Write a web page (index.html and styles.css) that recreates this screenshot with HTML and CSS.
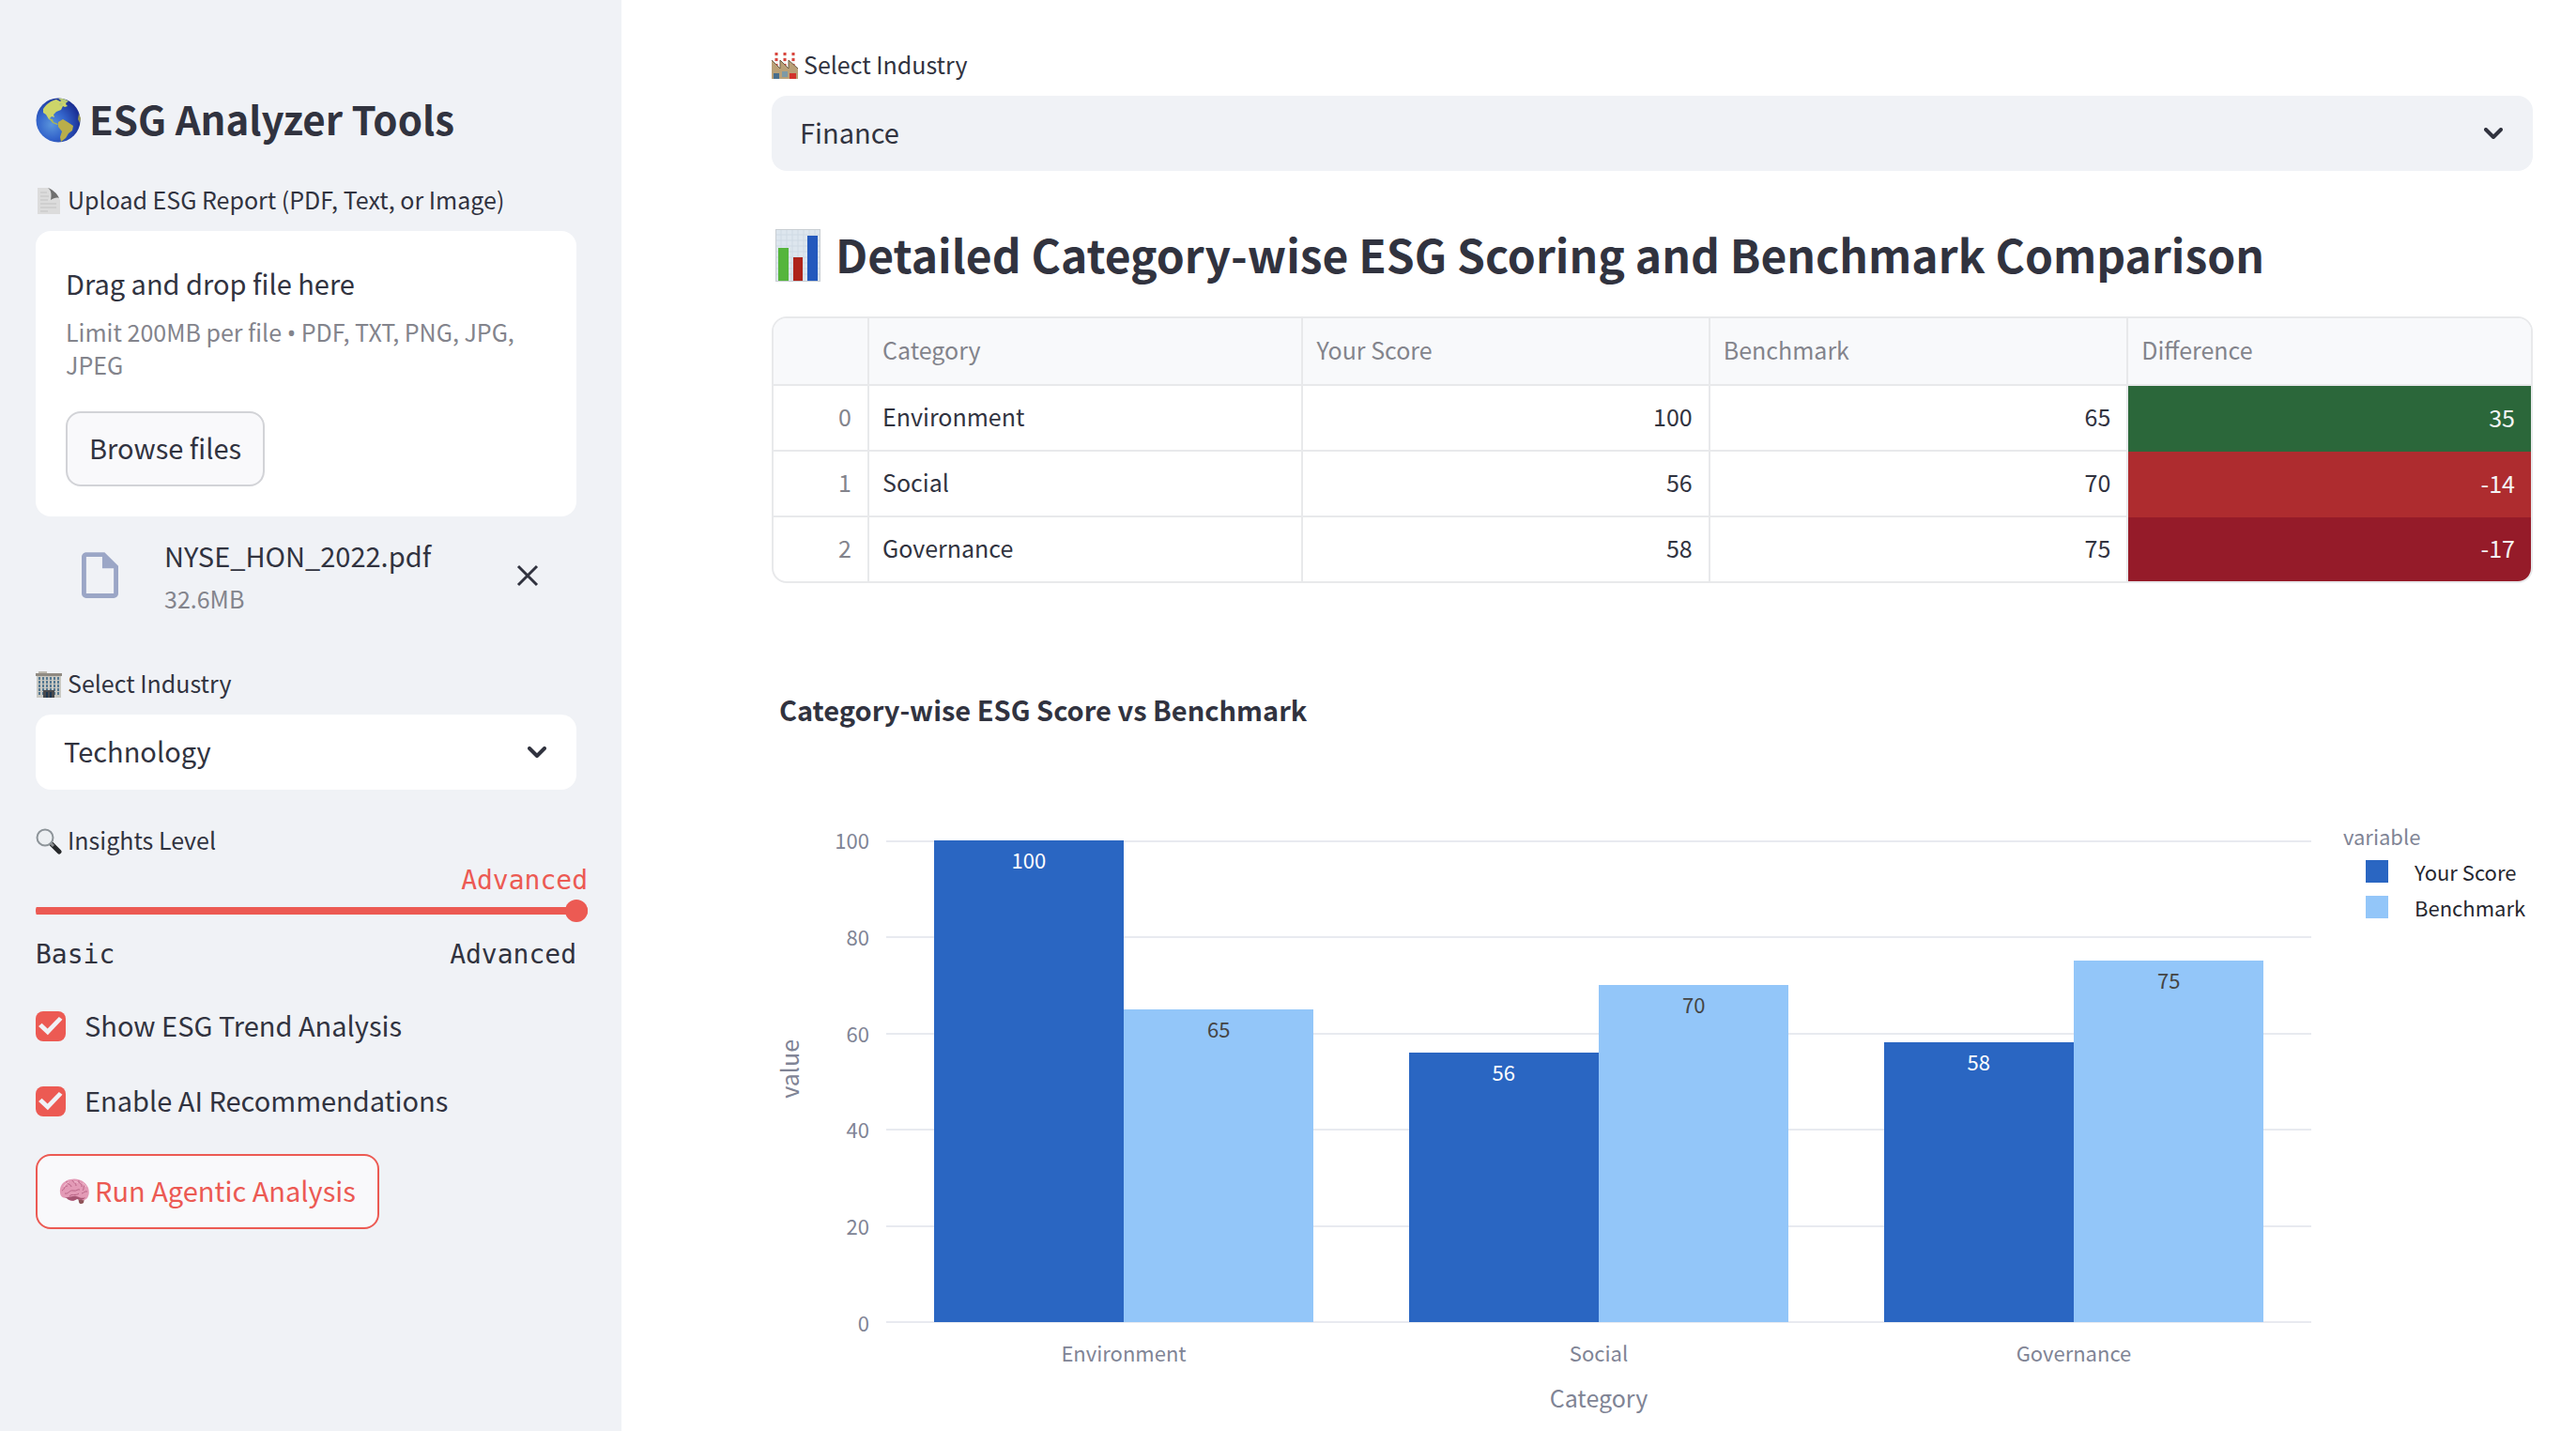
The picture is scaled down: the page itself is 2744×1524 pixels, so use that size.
FILE: index.html
```html
<!DOCTYPE html>
<html lang="en">
<head>
<meta charset="utf-8">
<title>ESG Analyzer</title>
<link rel="stylesheet" href="styles.css">
</head>
<body>
<div class="app">
  <aside class="sidebar">
    <h1 class="sidebar-title">
      <svg class="icon-globe" viewBox="0 0 48 48" aria-hidden="true">
        <defs><radialGradient id="sea" cx=".35" cy=".6" r=".65"><stop offset="0" stop-color="#5b96dc"/><stop offset=".5" stop-color="#3364cb"/><stop offset="1" stop-color="#1b2f94"/></radialGradient></defs>
        <circle cx="24" cy="24" r="23.500" fill="url(#sea)"/>
        <path d="M8 12C12 6 17 3 22 2l4 2 3-2 4 2-1 3 2 2-3 1-2-1-2 4-5 2-3 3 1 3-3-1-2 2 3 3-4-2-3-5-3-2z" fill="#cdd569"/>
        <path d="M24 1c4-1 8 1 11 3l-4 2-4-3zM26 5l3 1-1 3-3-1z" fill="#b9cb78"/>
        <path d="M14 22l4 1 1 3 5 2-1 1-5-2z" fill="#a9b657"/>
        <path d="M24 26l5-3 5 3 6 4-1 5-4 3-3 5-5 4-1-5 2-6-4-5z" fill="#b9ae4a"/>
        <path d="M46 17l2 5-1 5-2-4z" fill="#9c9a52"/>
      </svg>
      <span>ESG Analyzer Tools</span>
    </h1>

    <label class="label" for="report">
      <svg class="icon-small" viewBox="0 0 28 28" aria-hidden="true">
        <path d="M2 0h11c4 1 4 6 4 9 4-1 8 1 9 4v15H2z" fill="#dcdcdc"/>
        <path d="M13 0c5 2 10 6 12 11-3-1-6 0-9 2 1-5 1-10-3-13z" fill="#6f6f6f"/>
        <path d="M5 5h7M5 9h9M5 13h8M5 17h17M5 21h17M5 25h8" stroke="#c3c3c3" stroke-width="1"/>
      </svg>
      <span>Upload ESG Report (PDF, Text, or Image)</span>
    </label>
    <section class="dropzone">
      <input id="report" type="file" hidden>
      <p class="drop-title">Drag and drop file here</p>
      <p class="drop-hint">Limit 200MB per file <span class="bullet">•</span> PDF, TXT, PNG, JPG, JPEG</p>
      <button class="button" type="button"><span>Browse files</span></button>
    </section>
    <div class="file-row">
      <svg class="icon-file" viewBox="4 2 16 20" aria-hidden="true"><path fill="#9ba6c6" d="M14 2H6c-1.100 0-2 .9-2 2v16c0 1.100.9 2 2 2h12c1.100 0 2-.9 2-2V8l-6-6zM6 20V4h7v5h5v11H6z"/></svg>
      <div class="file-info">
        <div class="file-name">NYSE_HON_2022.pdf</div>
        <div class="file-size">32.6MB</div>
      </div>
      <button class="icon-button" type="button" aria-label="Remove file">
        <svg class="icon-close" viewBox="0 0 24 24" aria-hidden="true"><path d="M2 2l20 20M22 2L2 22" stroke="#31333f" stroke-width="3"/></svg>
      </button>
    </div>

    <label class="label" for="sector">
      <svg class="icon-small" viewBox="0 0 28 28" aria-hidden="true">
        <path d="M3 0h9v3H3z" fill="#bdb9b0"/><path d="M0 2h28v3H0z" fill="#8f8a82"/><path d="M1 5h26v23H1z" fill="#c8c8c2"/>
        <path d="M4 6v19M8 6v19M12 6v19M16 6v19M20 6v19M24 6v19" stroke="#557891" stroke-width="2" stroke-dasharray="3 1"/>
        <path d="M8 20h12v8H8z" fill="#4a4a4c"/><path d="M11 22h2v6h-2zM15 22h2v6h-2z" fill="#1d3650"/>
      </svg>
      <span>Select Industry</span>
    </label>
    <div class="select-box">
      <select class="select select-light" id="sector"><option>Technology</option></select>
      <svg class="icon-chevron" viewBox="0 0 20 12" aria-hidden="true"><path d="M2 2l8 8 8-8" fill="none" stroke="#31333f" stroke-width="4" stroke-linecap="round" stroke-linejoin="round"/></svg>
    </div>

    <label class="label label-slider" for="level">
      <svg class="icon-small" viewBox="0 0 28 28" aria-hidden="true">
        <path d="M17 17l8 8" stroke="#26282b" stroke-width="5" stroke-linecap="round"/><path d="M15 15l4 4" stroke="#8a8d90" stroke-width="3"/>
        <circle cx="10" cy="10" r="8.500" fill="#eceff2" stroke="#8d9499" stroke-width="2"/>
      </svg>
      <span>Insights Level</span>
    </label>
    <div class="slider">
      <output class="slider-value" for="level">Advanced</output>
      <input class="slider-input" id="level" type="range" min="0" max="2" value="2">
      <div class="slider-ends"><span>Basic</span><span>Advanced</span></div>
    </div>

    <label class="check-row"><input class="check" type="checkbox" checked><span>Show ESG Trend Analysis</span></label>
    <label class="check-row"><input class="check" type="checkbox" checked><span>Enable AI Recommendations</span></label>

    <button class="button button-run" type="button">
      <svg class="icon-brain" viewBox="0 0 32 28" aria-hidden="true">
        <path d="M20 20l7 1-1 5c-2 2-5 1-5-1z" fill="#8e5257"/>
        <path d="M1 15C0 8 5 2 12 1c8-2 16 2 19 9 2 6 0 12-4 13-3 1-5-1-8-1-4 3-8 2-11-1C3 21 1 18 1 15z" fill="#e39ab6"/>
        <path d="M4 19c5 3 10-1 14 0s6 3 10 1c-3 4-6 3-9 2-4 3-8 2-11-1z" fill="#a75573"/>
        <path d="M3 13c3-1 2-5 6-5M8 3c0 4 4 2 5 6M14 2c1 3 4 2 4 6M21 2c-1 4 4 3 3 7M28 7c-3 1-1 4-3 6M6 16c4 1 5-4 9-3s4-2 7-1M11 19c2-3 7 0 10-3M30 14c-3-1-4 2-6 2" fill="none" stroke="#b96486" stroke-width="1"/>
        <path d="M5 9c1-3 3-4 5-5M16 4c2-1 3 0 4 1M25 5c2 1 3 3 4 4" fill="none" stroke="#f3c0d2" stroke-width="1"/>
      </svg>
      <span>Run Agentic Analysis</span>
    </button>
  </aside>

  <main class="main">
    <label class="label" for="industry">
      <svg class="icon-small" viewBox="0 0 28 28" aria-hidden="true">
        <path d="M5 0v14M14 0v14M23 0v14" stroke="#f3efec" stroke-width="3"/>
        <path d="M5 0v14M14 0v14M23 0v14" stroke="#d9443c" stroke-width="3" stroke-dasharray="3 3"/>
        <path d="M0 8l9 9V8l9 9V8l10 9v11H0z" fill="#b9a077"/>
        <path d="M0 8l9 9V8l9 9V8l10 9" fill="none" stroke="#6d5d47" stroke-width="1"/>
        <path d="M2 22h6v6H2z" fill="#496f8d"/><path d="M11 20h6v6h-6z" fill="#7d9aa6"/><path d="M19 22h7v6h-7z" fill="#d2322b"/>
      </svg>
      <span>Select Industry</span>
    </label>
    <div class="select-box">
      <select class="select" id="industry"><option>Finance</option></select>
      <svg class="icon-chevron" viewBox="0 0 20 12" aria-hidden="true"><path d="M2 2l8 8 8-8" fill="none" stroke="#31333f" stroke-width="4" stroke-linecap="round" stroke-linejoin="round"/></svg>
    </div>

    <h2 class="main-title">
      <svg class="icon-chart" viewBox="0 0 48 56" aria-hidden="true">
        <path d="M0 0h48v56H0z" fill="#dde6ee"/>
        <path d="M0 6h48M0 12h48M0 18h48M0 24h48M0 30h48M0 36h48M0 42h48M0 48h48M6 0v56M12 0v56M18 0v56M24 0v56M30 0v56M36 0v56M42 0v56" stroke="#cfdae4" stroke-width="1"/>
        <path d="M0 0h48v56H0z" fill="none" stroke="#c9ced3" stroke-width="2"/>
        <path d="M3 20h11v35H3z" fill="#55b53c"/><path d="M19 30h10v25H19z" fill="#ae2319"/><path d="M34 7h11v48H34z" fill="#2459bd"/>
      </svg>
      <span>Detailed Category-wise ESG Scoring and Benchmark Comparison</span>
    </h2>

    <div class="table-frame">
      <table class="table">
        <colgroup><col class="col-index"><col class="col-category"><col class="col-score"><col class="col-bench"><col></colgroup>
        <thead><tr><th></th><th>Category</th><th>Your Score</th><th>Benchmark</th><th>Difference</th></tr></thead>
        <tbody>
          <tr><td class="index">0</td><td>Environment</td><td class="num">100</td><td class="num">65</td><td class="num diff gain">35</td></tr>
          <tr><td class="index">1</td><td>Social</td><td class="num">56</td><td class="num">70</td><td class="num diff loss">-14</td></tr>
          <tr><td class="index">2</td><td>Governance</td><td class="num">58</td><td class="num">75</td><td class="num diff deep-loss">-17</td></tr>
        </tbody>
      </table>
    </div>

    <section class="chart">
      <h3 class="chart-title">Category-wise ESG Score vs Benchmark</h3>
      <div class="chart-body">
        <div class="y-title"><span>value</span></div>
        <div class="y-ticks"><span>100</span><span>80</span><span>60</span><span>40</span><span>20</span><span>0</span></div>
        <div class="plot">
          <div class="grid-lines"><i></i><i></i><i></i><i></i><i></i><i></i></div>
          <div class="groups">
            <div class="group"><div class="bar score" style="height:100%">100</div><div class="bar bench" style="height:65%">65</div></div>
            <div class="group"><div class="bar score" style="height:56%">56</div><div class="bar bench" style="height:70%">70</div></div>
            <div class="group"><div class="bar score" style="height:58%">58</div><div class="bar bench" style="height:75%">75</div></div>
          </div>
        </div>
        <div class="legend">
          <div class="legend-title">variable</div>
          <div class="legend-item"><i class="swatch score"></i><span>Your Score</span></div>
          <div class="legend-item"><i class="swatch bench"></i><span>Benchmark</span></div>
        </div>
        <div class="x-axis">
          <div class="x-ticks"><span>Environment</span><span>Social</span><span>Governance</span></div>
          <div class="x-title">Category</div>
        </div>
      </div>
    </section>
  </main>
</div>
</body>
</html>
```
FILE: styles.css
```css
:root {
  --ink: #31333f;
  --muted: #83848c;
  --axis: #808495;
  --panel: #f0f2f6;
  --line: #e8e9eb;
  --red: #ec5a53;
  --blue: #2a66c2;
  --sky: #93c6f9;
}

* {
  box-sizing: border-box;
}

body {
  margin: 0;
  color: var(--ink);
  background: #fff;
  font-family: "Noto Sans CJK SC", "Noto Sans", sans-serif;
  font-size: 29px;
  line-height: 48px;
}

button,
select {
  font: inherit;
  color: inherit;
}

h1,
h2,
h3,
p {
  margin: 0;
}

svg {
  display: block;
  flex: none;
}

.app {
  display: flex;
  min-height: 100vh;
}

.sidebar {
  flex: none;
  width: 662px;
  padding: 96px 48px 48px 38px;
  background: var(--panel);
}

.main {
  flex: 1;
  min-width: 0;
  padding: 48px 46px 0 160px;
}

/* The font's line box sits low, so text beside an icon is lifted a little */
.sidebar-title span,
.main-title span,
.label span,
.check-row span,
.button span {
  padding-bottom: 4px;
}

.sidebar-title {
  display: flex;
  align-items: center;
  gap: 9px;
  height: 64px;
  margin-bottom: 32px;
  font-size: 42px;
  font-weight: 600;
  line-height: 60px;
}

.icon-globe {
  width: 48px;
  height: 48px;
}

.label {
  display: flex;
  align-items: center;
  gap: 6px;
  height: 44px;
  margin-bottom: 10px;
  font-size: 25px;
  line-height: 40px;
}

.icon-small {
  width: 28px;
  height: 28px;
}

.dropzone {
  padding: 32px;
  border-radius: 16px;
  background: #fff;
}

.drop-title {
  line-height: 46px;
}

.drop-hint {
  margin: 12px 0 32px;
  color: var(--muted);
  font-size: 25px;
  line-height: 35px;
}

.bullet {
  font-family: "Noto Sans", sans-serif;
  line-height: 24px;
}

.button {
  display: inline-flex;
  align-items: center;
  gap: 6px;
  height: 80px;
  padding: 0 23px;
  border: 2px solid #d2d3d7;
  border-radius: 16px;
  background: #f9f9fb;
}

.file-row {
  display: flex;
  align-items: center;
  height: 109px;
  margin: 8px 0 40px;
  padding: 0 40px 0 49px;
}

.icon-file {
  width: 39px;
  height: 49px;
}

.file-info {
  flex: 1;
  margin-left: 49px;
  padding-top: 3px;
  line-height: 46px;
}

.file-size {
  color: var(--muted);
  font-size: 25px;
}

.icon-button {
  padding: 0;
  border: 0;
  background: none;
}

.icon-close {
  width: 24px;
  height: 24px;
}

.select-box {
  display: grid;
  align-items: center;
}

.select {
  grid-area: 1 / 1;
  width: 100%;
  height: 80px;
  padding: 0 30px 4px;
  border: 0;
  border-radius: 16px;
  appearance: none;
  background: var(--panel);
}

.select-light {
  background: #fff;
}

.icon-chevron {
  grid-area: 1 / 1;
  justify-self: end;
  width: 20px;
  height: 12px;
  margin-right: 32px;
  pointer-events: none;
}

.label-slider {
  margin: 33px 0 0;
}

.slider {
  display: flex;
  flex-direction: column;
  margin-bottom: 32px;
  font-family: "DejaVu Sans Mono", monospace;
  font-size: 28px;
  line-height: 40px;
}

.slider-value {
  align-self: flex-end;
  margin-right: -12px;
  color: var(--red);
}

.slider-input {
  width: calc(100% + 12px);
  height: 24px;
  margin: 0 0 15px;
  border-radius: 12px;
  appearance: none;
  background: linear-gradient(var(--red), var(--red)) center / 100% 8px no-repeat;
}

.slider-input::-webkit-slider-thumb {
  width: 24px;
  height: 24px;
  border-radius: 50%;
  appearance: none;
  background: var(--red);
}

.slider-ends {
  display: flex;
  justify-content: space-between;
}

.check-row {
  display: flex;
  align-items: center;
  gap: 20px;
  height: 48px;
  margin-bottom: 32px;
  line-height: 44px;
}

.check {
  display: grid;
  width: 32px;
  height: 32px;
  margin: 0;
  border-radius: 8px;
  appearance: none;
  background: var(--red);
}

.check::before {
  width: 26px;
  height: 20px;
  margin: auto;
  background: var(--panel);
  clip-path: polygon(0 50%, 14% 34%, 37% 62%, 84% 0, 98% 14%, 38% 96%);
  content: "";
}

.button-run {
  border-color: var(--red);
  color: var(--red);
}

.icon-brain {
  width: 32px;
  height: 28px;
}

.main-title {
  display: flex;
  align-items: center;
  gap: 16px;
  height: 83px;
  margin: 48px 0 24px;
  padding-left: 4px;
  font-size: 48px;
  font-weight: 600;
  line-height: 72px;
}

.icon-chart {
  width: 48px;
  height: 56px;
}

.table-frame {
  overflow: hidden;
  border: 2px solid var(--line);
  border-radius: 16px;
}

.table {
  width: 100%;
  border-spacing: 0;
  table-layout: fixed;
  font-size: 25px;
  line-height: 32px;
}

.col-index {
  width: 102px;
}

.col-category {
  width: 24.700%;
}

.col-score {
  width: 23.150%;
}

.col-bench {
  width: 23.800%;
}

.table th,
.table td {
  height: 70px;
  padding: 0 17px 4px 14px;
  border-right: 2px solid var(--line);
  border-bottom: 2px solid var(--line);
  text-align: left;
}

.table th {
  height: 72px;
  background: #f8f9fb;
  color: var(--muted);
  font-weight: 400;
}

.table tr > :last-child {
  border-right: 0;
}

.table tbody tr:last-child > td {
  height: 68px;
  border-bottom: 0;
}

.table .num,
.table .index {
  text-align: right;
}

.table .index {
  color: var(--muted);
}

.table .diff {
  border: 0;
  color: #f4f5f6;
}

.gain {
  background: #2b673a;
}

.loss {
  background: #ae2c2f;
}

.deep-loss {
  background: #951b29;
}

.chart {
  padding-top: 112px;
}

.chart-title {
  padding-left: 8px;
  font-size: 29px;
  font-weight: 700;
  line-height: 44px;
}

.chart-body {
  display: grid;
  grid-template-columns: 36px 68px 1fr 236px;
  grid-template-rows: 514px auto;
  margin-top: 118px;
  color: var(--axis);
  font-size: 22px;
  line-height: 32px;
}

.y-title {
  display: grid;
  place-items: center;
  padding-bottom: 28px;
  font-size: 25px;
}

.y-title span {
  writing-mode: vertical-rl;
  transform: rotate(180deg);
}

.y-ticks {
  display: flex;
  flex-direction: column;
  justify-content: space-between;
  margin: -17px 0 -15px;
  text-align: right;
}

.plot {
  display: grid;
  margin-left: 18px;
}

.grid-lines,
.groups {
  grid-area: 1 / 1;
}

.grid-lines {
  display: flex;
  flex-direction: column;
  justify-content: space-between;
}

.grid-lines i {
  height: 2px;
  background: #e8eaf0;
}

.groups {
  display: grid;
  grid-template-columns: repeat(3, 1fr);
}

.group {
  display: flex;
  align-items: flex-end;
  padding: 0 10% 1px;
}

.bar {
  flex: 1;
  padding-top: 4px;
  text-align: center;
}

.score {
  background: var(--blue);
  color: #fff;
}

.bench {
  background: var(--sky);
  color: #444;
}

.legend {
  margin-top: -24px;
  padding-left: 34px;
  line-height: 38px;
}

.legend-item {
  display: flex;
  align-items: center;
  gap: 28px;
  padding-left: 24px;
  color: #262730;
}

.swatch {
  width: 24px;
  height: 24px;
}

.x-axis {
  grid-column: 3;
  margin-left: 18px;
  padding-top: 15px;
  text-align: center;
}

.x-ticks {
  display: grid;
  grid-template-columns: repeat(3, 1fr);
}

.x-title {
  margin-top: 16px;
  font-size: 25px;
}
```
